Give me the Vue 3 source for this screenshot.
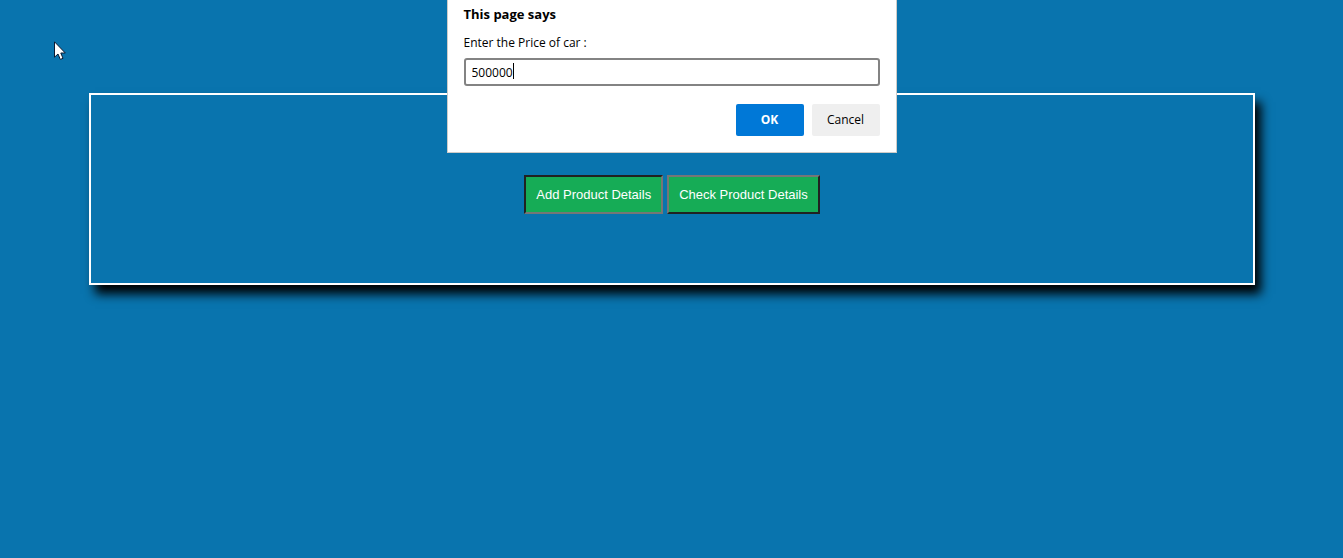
<script setup>
import { ref } from 'vue'

const price = ref('500000')
</script>

<template>
  <main class="page">
    <section class="panel">
      <button type="button" class="action pressed">Add Product Details</button>
      <button type="button" class="action">Check Product Details</button>
    </section>

    <form class="prompt" role="dialog" aria-labelledby="prompt-title" @submit.prevent>
      <h1 id="prompt-title" class="title">This page says</h1>
      <label class="message" for="price">Enter the Price of car :</label>
      <div class="field">
        <input id="price" v-model="price" class="input" type="text" autocomplete="off" />
        <span class="caret" :style="{ '--chars': price.length }"></span>
      </div>
      <div class="buttons">
        <button type="submit" class="button primary">OK</button>
        <button type="button" class="button">Cancel</button>
      </div>
    </form>

    <svg class="pointer" width="12" height="20" viewBox="0 0 12 20" aria-hidden="true">
      <path d="M.5 .8V16.2L4 13L6.3 18.4L9 17.3L6.8 12H11.3Z" fill="#fff" stroke="#0a1a33" stroke-width="1" />
    </svg>
  </main>
</template>

<style>
body {
  margin: 0;
  background: #0974ae;
}
</style>

<style scoped>
.page {
  display: flow-root;
  position: relative;
  min-height: 100vh;
  box-sizing: border-box;
  background: #0974ae;
}

.panel {
  display: flex;
  justify-content: center;
  gap: 4px;
  margin: 93px 88px 0 89px;
  padding: 80px 0 69px;
  border: 2px solid #fff;
  box-shadow: 6px 9px 10px #000;
}

.action {
  padding: 10px;
  border: 2px solid;
  border-color: #767676 #212121 #212121 #767676;
  background: #16ac56;
  color: #fff;
  font: 13px/15px "Liberation Sans", Arial, sans-serif;
}

.action.pressed {
  border-color: #212121 #767676 #767676 #212121;
}

.prompt {
  position: absolute;
  top: 0;
  left: 50%;
  width: 450px;
  margin-left: -225px;
  padding: 4px 16px 16px;
  box-sizing: border-box;
  border: 1px solid #cfccc8;
  border-top: 0;
  background: #fff;
  color: #000;
  font: 12px/16px "Open Sans", "Segoe UI", sans-serif;
}

.title {
  margin: 0;
  font-size: 13px;
  line-height: 20px;
  font-weight: 700;
}

.message {
  display: block;
  margin: 11px 0 7px;
}

.field {
  position: relative;
}

.input {
  display: block;
  width: 100%;
  height: 28px;
  padding: 0 6px;
  box-sizing: border-box;
  border: 2px solid #838383;
  border-radius: 3px;
  outline: 0;
  background: #fff;
  color: #000;
  font: inherit;
}

.caret {
  position: absolute;
  top: 5px;
  left: calc(8px + var(--chars) * 1ch);
  width: 1px;
  height: 16px;
  background: #000;
}

.buttons {
  display: flex;
  justify-content: flex-end;
  gap: 8px;
  margin-top: 18px;
}

.button {
  width: 68px;
  height: 32px;
  padding: 0;
  border: 0;
  border-radius: 2px;
  background: #efefef;
  color: #000;
  font: inherit;
}

.button.primary {
  background: #0078d7;
  color: #fff;
  font-weight: 700;
}

.pointer {
  position: absolute;
  top: 41px;
  left: 54px;
}
</style>
